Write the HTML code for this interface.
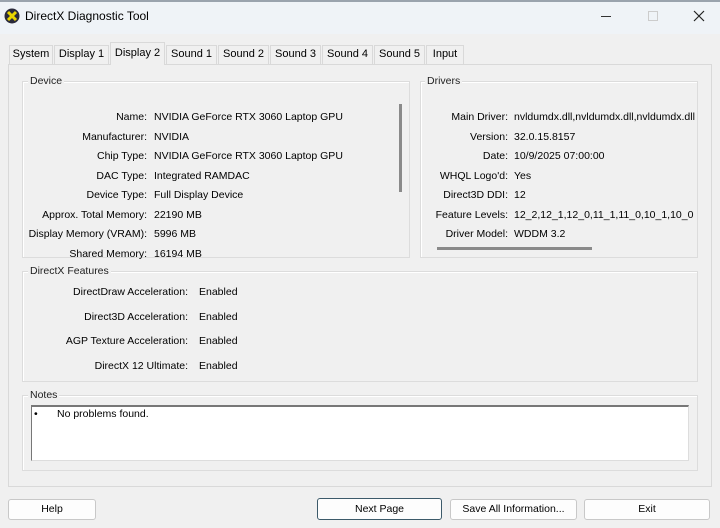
<!DOCTYPE html>
<html><head><style>
*{margin:0;padding:0;box-sizing:border-box}
body{width:720px;height:528px;background:#f0f0f0;font-family:"Liberation Sans",sans-serif;font-size:10.5px;color:#000;position:relative;overflow:hidden}
.a{position:absolute;white-space:nowrap}
.g{position:absolute;border:1px solid #dcdcdc;box-shadow:inset 1px 1px 0 #fff}
.gt{position:absolute;background:#f0f0f0;padding:0 2px;font-size:10.5px;color:#222}
.r{text-align:right}
.btn{position:absolute;height:21px;border:1px solid #c8c8c8;border-radius:3px;background:#fdfdfd;text-align:center;line-height:19px}
.tab{position:absolute;top:45px;height:19px;border:1px solid #d9d9d9;border-bottom:none;background:#f0f0f0;line-height:17px;text-align:center;font-size:11px}
</style></head><body>
<div class="a" style="left:0;top:0;width:720px;height:34px;background:#eff3f7"></div>
<div class="a" style="left:0;top:0;width:720px;height:2px;background:#9aa3ad"></div>
<svg class="a" style="left:4px;top:8px" width="16" height="16" viewBox="0 0 16 16"><circle cx="8" cy="8" r="7.5" fill="#2a2a3a"/><path d="M4 4 L12 12 M12 4 L4 12" stroke="#e8d400" stroke-width="3"/></svg>
<div class="a" style="left:25px;top:9px;font-size:12px">DirectX Diagnostic Tool</div>
<div class="a" style="left:601px;top:16px;width:10px;height:1px;background:#333"></div>
<div class="a" style="left:648px;top:11px;width:10px;height:10px;border:1px solid #ccc"></div>
<svg class="a" style="left:693px;top:10px" width="12" height="12"><path d="M1 1L11 11M11 1L1 11" stroke="#222" stroke-width="1.2"/></svg>

<div class="a" style="left:8px;top:64px;width:704px;height:423px;border:1px solid #d9d9d9;background:#f0f0f0"></div>
<div class="tab" style="left:9px;width:44px">System</div>
<div class="tab" style="left:54px;width:55px">Display 1</div>
<div class="tab" style="left:110px;width:55px;top:42px;height:23px;background:#f0f0f0;line-height:20px">Display 2</div>
<div class="tab" style="left:166px;width:51px">Sound 1</div>
<div class="tab" style="left:218px;width:51px">Sound 2</div>
<div class="tab" style="left:270px;width:51px">Sound 3</div>
<div class="tab" style="left:322px;width:51px">Sound 4</div>
<div class="tab" style="left:374px;width:51px">Sound 5</div>
<div class="tab" style="left:426px;width:38px">Input</div>

<div class="g" style="left:22px;top:81px;width:388px;height:177px"></div>
<div class="gt" style="left:28px;top:75px">Device</div>
<div class="a" style="left:399px;top:104px;width:3px;height:88px;background:#8a8a8a"></div>
<div class="a r" style="left:20px;width:127px;top:108px;line-height:19.5px">Name:<br>Manufacturer:<br>Chip Type:<br>DAC Type:<br>Device Type:<br>Approx. Total Memory:<br>Display Memory (VRAM):<br>Shared Memory:</div>
<div class="a" style="left:154px;top:108px;line-height:19.5px">NVIDIA GeForce RTX 3060 Laptop GPU<br>NVIDIA<br>NVIDIA GeForce RTX 3060 Laptop GPU<br>Integrated RAMDAC<br>Full Display Device<br>22190 MB<br>5996 MB<br>16194 MB</div>

<div class="g" style="left:420px;top:81px;width:278px;height:177px"></div>
<div class="gt" style="left:425px;top:75px">Drivers</div>
<div class="a r" style="left:420px;width:88px;top:108px;line-height:19.5px">Main Driver:<br>Version:<br>Date:<br>WHQL Logo'd:<br>Direct3D DDI:<br>Feature Levels:<br>Driver Model:</div>
<div class="a" style="left:514px;top:108px;line-height:19.5px;width:183px;overflow:hidden">nvldumdx.dll,nvldumdx.dll,nvldumdx.dll<br>32.0.15.8157<br>10/9/2025 07:00:00<br>Yes<br>12<br>12_2,12_1,12_0,11_1,11_0,10_1,10_0<br>WDDM 3.2</div>
<div class="a" style="left:437px;top:247px;width:155px;height:3px;background:#8a8a8a"></div>

<div class="g" style="left:22px;top:271px;width:676px;height:111px"></div>
<div class="gt" style="left:28px;top:265px">DirectX Features</div>
<div class="a r" style="left:30px;width:158px;top:280px;line-height:24.5px">DirectDraw Acceleration:<br>Direct3D Acceleration:<br>AGP Texture Acceleration:<br>DirectX 12 Ultimate:</div>
<div class="a" style="left:199px;top:280px;line-height:24.5px">Enabled<br>Enabled<br>Enabled<br>Enabled</div>

<div class="g" style="left:22px;top:395px;width:676px;height:76px"></div>
<div class="gt" style="left:28px;top:389px">Notes</div>
<div class="a" style="left:31px;top:405px;width:658px;height:56px;background:#fff;border-top:2px solid #777;border-left:1px solid #777;border-right:1px solid #ddd;border-bottom:1px solid #ddd"></div>
<div class="a" style="left:34px;top:408px">•</div>
<div class="a" style="left:57px;top:408px">No problems found.</div>

<div class="btn" style="left:8px;top:499px;width:88px">Help</div>
<div class="btn" style="left:317px;top:498px;width:125px;height:22px;line-height:20px;border:1px solid #3c5a6a">Next Page</div>
<div class="btn" style="left:450px;top:499px;width:127px">Save All Information...</div>
<div class="btn" style="left:584px;top:499px;width:126px">Exit</div>
</body></html>
